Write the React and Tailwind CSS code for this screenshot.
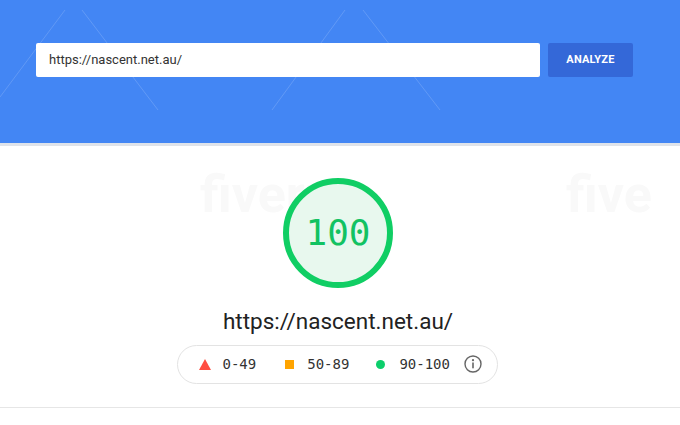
import React from 'react';

const mono = { fontFamily: '"DejaVu Sans Mono", "Liberation Mono", monospace' };

const App = () => {
    return (
        <div className="w-[680px] h-[425px] overflow-hidden bg-white font-['Roboto',sans-serif] relative">
            {/* Header */}
            <div className="relative h-[146px] bg-[#4386f4] border-b-[3px] border-[#dfe3ea] pt-[43px] pl-[36px] flex items-start gap-[8px]">
                <svg className="absolute inset-0 pointer-events-none" width="680" height="146">
                    <g stroke="#ffffff" strokeOpacity="0.16" strokeWidth="1">
                        <line x1="65" y1="10" x2="0" y2="97" />
                        <line x1="82" y1="10" x2="158" y2="110" />
                        <line x1="345" y1="10" x2="272" y2="110" />
                        <line x1="363" y1="10" x2="440" y2="110" />
                    </g>
                </svg>
                <div className="relative w-[504px] h-[34px] bg-white rounded-[2px] flex items-center pl-[13px] text-[13px] text-[#333]">
                    https://nascent.net.au/
                </div>
                <button className="relative w-[85px] h-[34px] bg-[#3468d8] rounded-[2px] text-white text-[11px] font-bold tracking-[0.02em]">
                    ANALYZE
                </button>
            </div>

            {/* Body */}
            <div className="relative flex flex-col items-center">
                <div className="absolute left-[200px] top-[10px] text-[52px] font-bold text-[#f9f9f9] select-none">fiverr</div>
                <div className="absolute left-[566px] top-[10px] text-[52px] font-bold text-[#f9f9f9] select-none">five</div>

                <div className="relative mt-[32px] ml-[-4px] w-[110px] h-[110px] rounded-full border-[6px] border-[#10ce64] bg-[#e8f8ee] flex items-center justify-center">
                    <span className="text-[36px] text-[#12c262] leading-none" style={mono}>100</span>
                </div>

                <div className="relative mt-[22px] ml-[-4px] text-[22.5px] text-[#222] leading-none">https://nascent.net.au/</div>

                <div className="relative mt-[12px] ml-[-6px] w-[321px] h-[39px] rounded-full border border-[#e3e3e3] flex items-center pl-[21px] text-[14px] text-[#333]" style={mono}>
                    <svg width="12" height="11" viewBox="0 0 12 11"><polygon points="6,0 12,11 0,11" fill="#ff4e42" /></svg>
                    <span className="ml-[12px]">0-49</span>
                    <span className="ml-[29px] w-[9px] h-[9px] bg-[#ffa400]" />
                    <span className="ml-[13px]">50-89</span>
                    <span className="ml-[27px] w-[9px] h-[9px] rounded-full bg-[#0cce6b]" />
                    <span className="ml-[14px]">90-100</span>
                    <svg className="ml-[14px]" width="18" height="18" viewBox="0 0 18 18">
                        <circle cx="9" cy="9" r="8" fill="none" stroke="#666" strokeWidth="1.4" />
                        <circle cx="9" cy="5.2" r="1.1" fill="#666" />
                        <rect x="8.2" y="7.5" width="1.6" height="5.8" fill="#666" />
                    </svg>
                </div>

                <div className="relative mt-[23px] w-full h-[1px] bg-[#e6e6e6]" />
            </div>
        </div>
    );
};

export default App;
